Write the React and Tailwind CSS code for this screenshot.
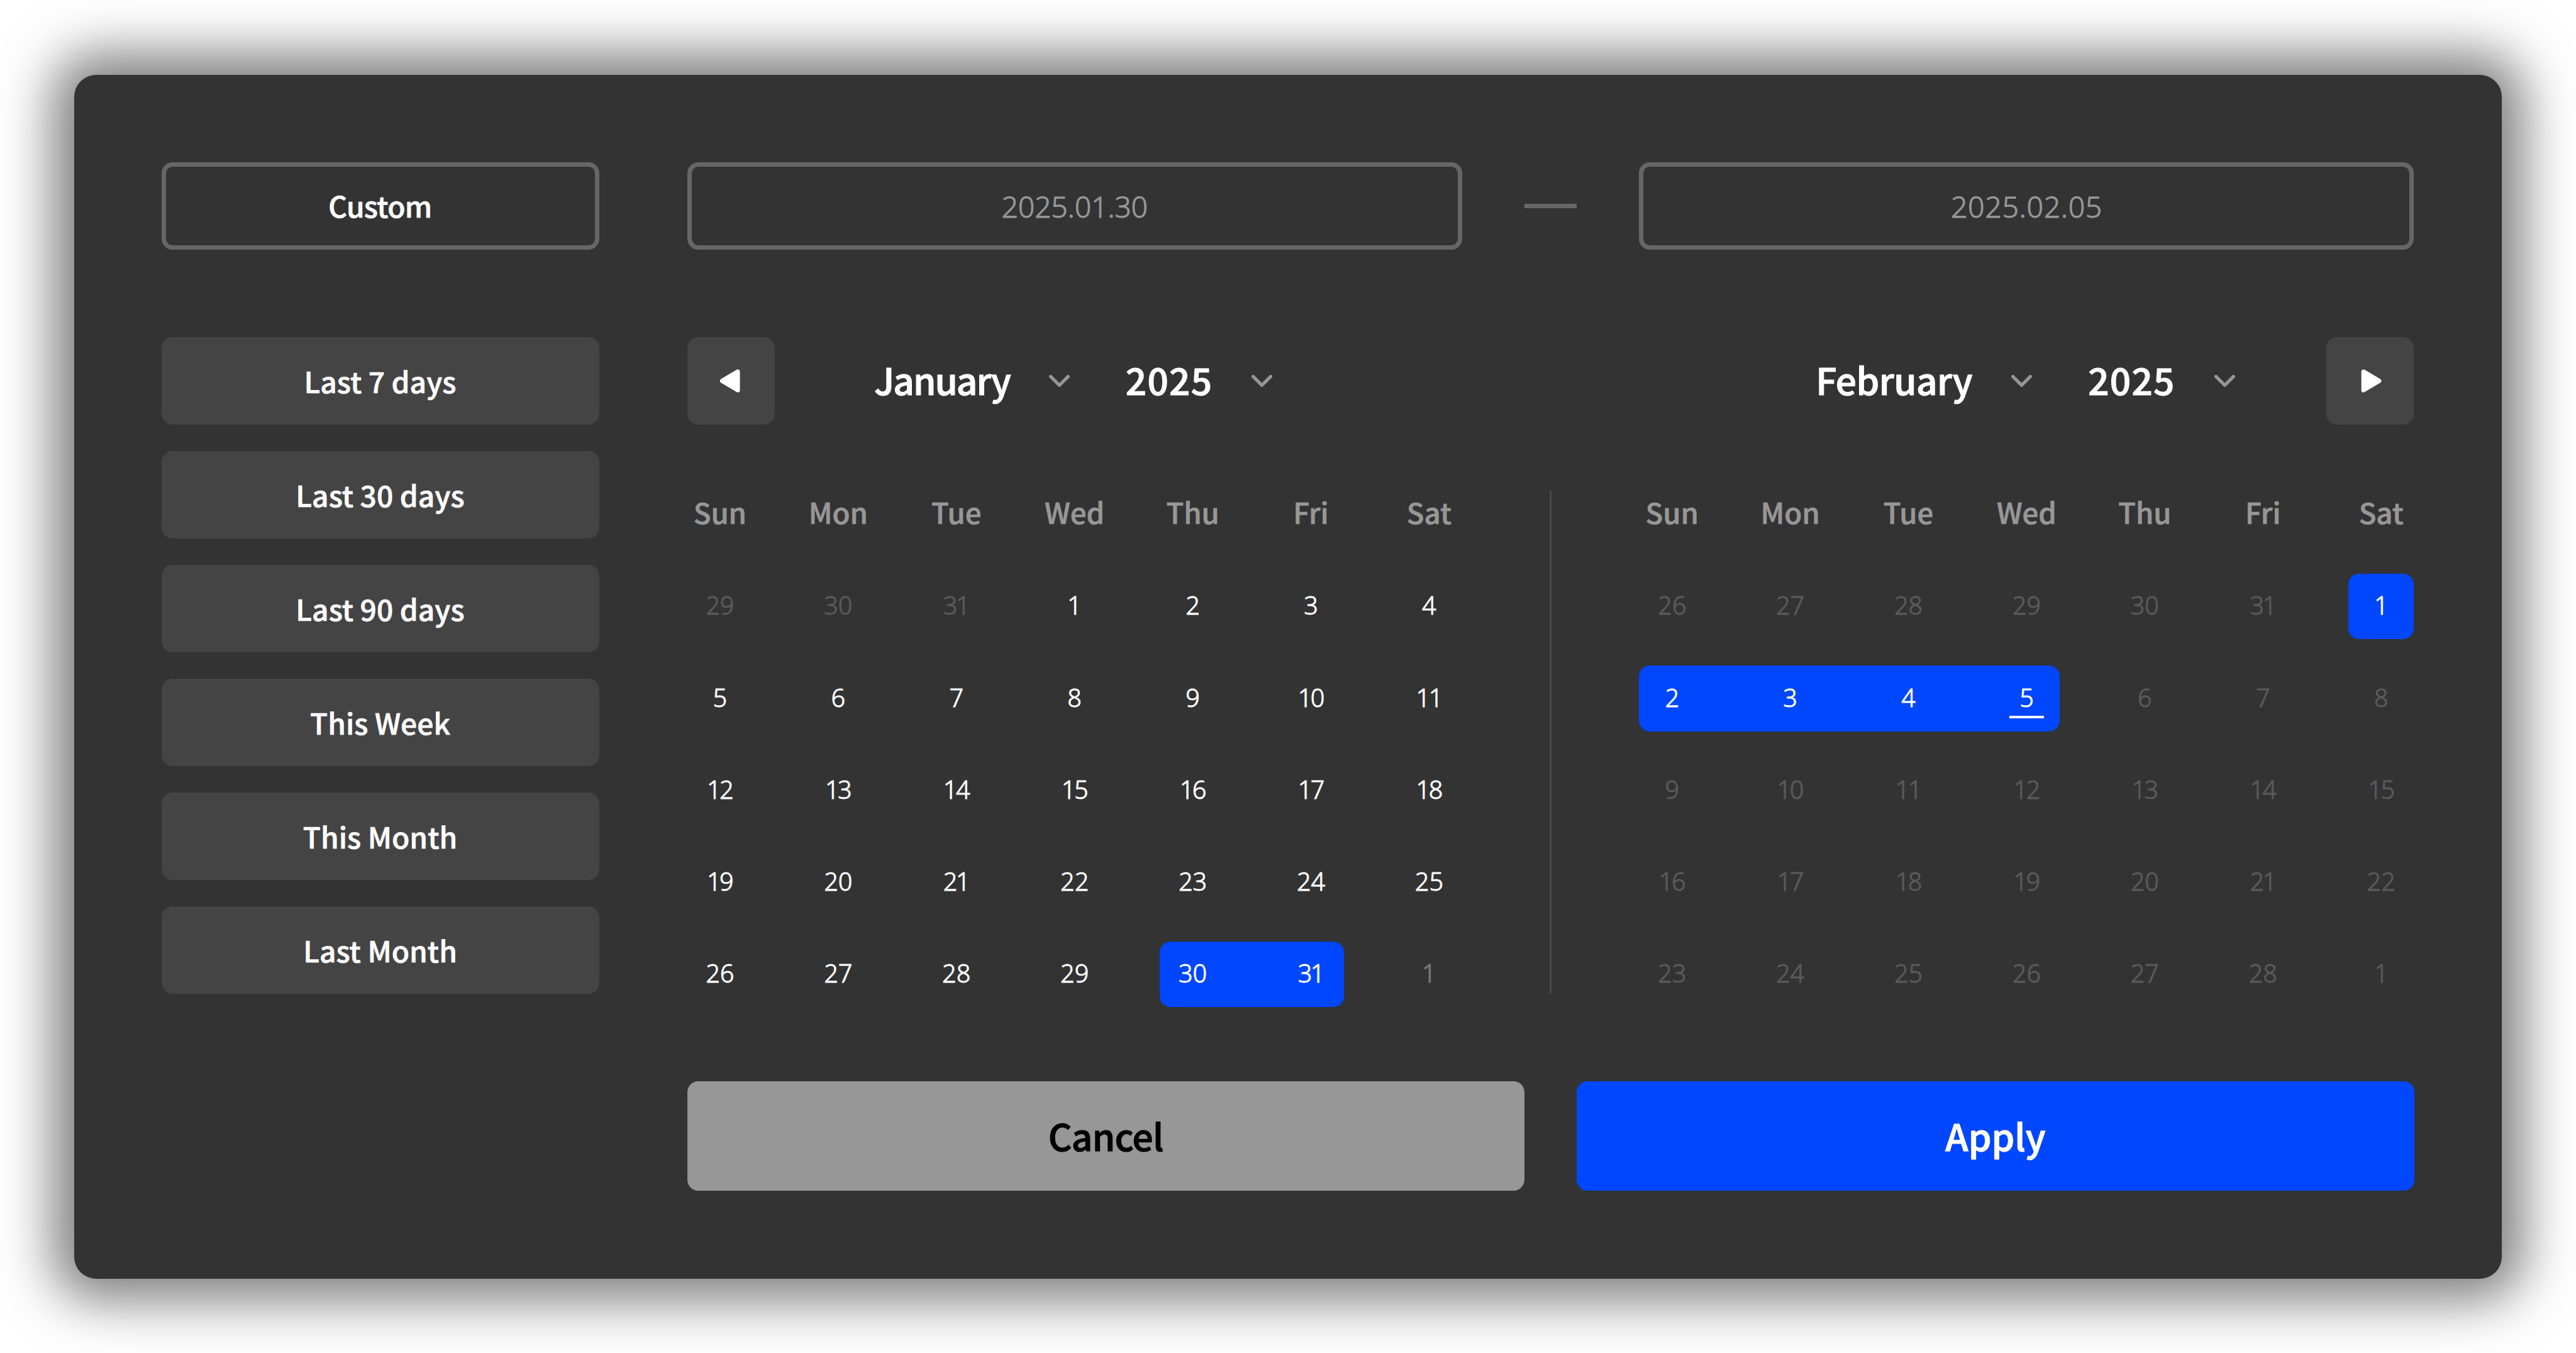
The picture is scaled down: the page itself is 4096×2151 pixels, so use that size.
import React, { useState } from "react";
import clsx from "clsx";

const PRESETS = [
  "Last 7 days",
  "Last 30 days",
  "Last 90 days",
  "This Week",
  "This Month",
  "Last Month",
];

const WEEKDAYS = ["Sun", "Mon", "Tue", "Wed", "Thu", "Fri", "Sat"];

const range = (from, to, state) =>
  Array.from({ length: to - from + 1 }, (_, i) => ({ day: from + i, state }));

const JANUARY = [
  ...range(29, 31, "disabled"),
  ...range(1, 29, "default"),
  ...range(30, 31, "selected"),
  ...range(1, 1, "outside"),
];

const FEBRUARY = [
  ...range(26, 31, "disabled"),
  ...range(1, 4, "selected"),
  { day: 5, state: "selected", today: true },
  ...range(6, 28, "disabled"),
  ...range(1, 1, "disabled"),
];

const toWeeks = (days) => {
  const weeks = [];
  for (let i = 0; i < days.length; i += 7) weeks.push(days.slice(i, i + 7));
  return weeks;
};

const dayColor = {
  default: "text-white",
  selected: "text-white",
  disabled: "text-[#5a5a5a]",
  outside: "text-[#7a7a7a]",
};

const monthTracking = {
  January: "-tracking-[1.9px]",
  February: "-tracking-[0.5px]",
};

const ChevronDown = () => (
  <svg className="h-[20px] w-[33px] shrink-0" viewBox="0 0 38 23" fill="none">
    <path
      d="M3 3L19 19L35 3"
      stroke="#979797"
      strokeWidth="6"
      strokeLinecap="round"
      strokeLinejoin="round"
    />
  </svg>
);

const NavButton = ({ prev }) => (
  <button
    aria-label={prev ? "Previous month" : "Next month"}
    className="size-[139.2px] shrink-0 rounded-[17.4px] bg-[#444]"
  >
    <svg className={clsx("size-full", prev && "-scale-x-100")} viewBox="0 0 160 160">
      <path
        d="M68 63V97L96.5 80Z"
        fill="white"
        stroke="white"
        strokeWidth="8"
        strokeLinejoin="round"
      />
    </svg>
  </button>
);

const DateField = ({ value }) => (
  <div className="flex h-[139.2px] w-[1232px] items-center justify-center rounded-[17.4px] border-[7px] border-[#666] pt-[2px] font-['Noto_Sans',sans-serif] text-[46.5px] leading-none font-light text-[#979797] [-webkit-text-stroke:0.9px]">
    <span className={value.includes("1") ? "-tracking-[0.3px]" : "tracking-[0.6px]"}>{value}</span>
  </div>
);

const MonthHeader = ({ month, year, side }) => (
  <div className="flex h-[139.2px] items-center">
    {side === "left" ? <NavButton prev /> : <div className="w-[139.2px]" />}
    <div className="flex flex-1 items-center justify-center pr-[4px] text-[58.5px] leading-none font-medium text-white [-webkit-text-stroke:1.1px]">
      <span className={clsx("mr-[62px] pb-[4px]", monthTracking[month])}>{month}</span>
      <ChevronDown />
      <span className="mr-[62px] ml-[89px] pb-[4px] tracking-[1.3px]">{year}</span>
      <ChevronDown />
    </div>
    {side === "right" ? <NavButton /> : <div className="w-[139.2px]" />}
  </div>
);

const Day = ({ item, prev, next }) => {
  const selected = item.state === "selected";
  const joinsPrev = prev?.state === "selected";
  const joinsNext = next?.state === "selected";
  const label = String(item.day);

  return (
    <div className="relative flex size-[104.4px] items-center justify-center">
      {selected && (
        <div
          className={clsx(
            "absolute inset-y-0 left-0 bg-[#0047ff]",
            !joinsPrev && "rounded-l-[17.4px]",
            joinsNext ? "-right-[85px]" : "right-0 rounded-r-[17.4px]"
          )}
        />
      )}
      <span
        className={clsx(
          "relative pb-[2px]",
          dayColor[item.state],
          label.length > 1 && label.includes("1") && "pr-[1.5px] -tracking-[2.5px]"
        )}
      >
        {label}
      </span>
      {item.today && (
        <div className="absolute bottom-[20.9px] h-[3.5px] w-[55.7px] bg-white" />
      )}
    </div>
  );
};

const Calendar = ({ month, year, side, days }) => (
  <div className="w-[1232px]">
    <MonthHeader month={month} year={year} side={side} />

    {/* Weekdays */}
    <div className="mt-[90.5px] flex h-[104.4px] items-center justify-between text-[45.5px] leading-none font-medium text-[#979797] [-webkit-text-stroke:0.7px]">
      {WEEKDAYS.map((name) => (
        <div key={name} className="flex w-[104.4px] justify-center pb-[8px]">
          {name}
        </div>
      ))}
    </div>

    {/* Weeks */}
    <div className="mt-[41.8px] flex flex-col gap-[41.8px] font-['Noto_Sans',sans-serif] text-[39.6px] leading-none font-light [-webkit-text-stroke:0.9px]">
      {toWeeks(days).map((week, w) => (
        <div key={w} className="flex justify-between">
          {week.map((item, i) => (
            <Day key={i} item={item} prev={week[i - 1]} next={week[i + 1]} />
          ))}
        </div>
      ))}
    </div>
  </div>
);

export default function App() {
  const [dates] = useState({ start: "2025.01.30", end: "2025.02.05" });

  return (
    <div className="flex h-[2151px] w-[4096px] items-center justify-center overflow-hidden bg-white font-['Noto_Sans_CJK_KR',sans-serif]">
      <div className="flex h-[1914px] w-[3859.4px] gap-[139.2px] rounded-[34.8px] bg-[#333] p-[139.2px] shadow-[0_0_83.5px_34.8px_rgba(0,0,0,0.5)]">
        {/* Presets */}
        <div className="flex w-[696px] shrink-0 flex-col text-[46px] leading-none font-medium text-white [-webkit-text-stroke:0.7px]">
          <button className="mb-[139.2px] h-[139.2px] rounded-[17.4px] border-[7px] border-[#666] pr-[2px] pb-[2px] -tracking-[0.6px]">
            Custom
          </button>
          <div className="flex flex-col gap-[41.8px]">
            {PRESETS.map((label) => (
              <button key={label} className="h-[139.2px] rounded-[17.4px] bg-[#444] pr-[2px] pb-[2px] tracking-[0.1px]">
                {label}
              </button>
            ))}
          </div>
        </div>

        <div className="flex flex-1 flex-col">
          {/* Selected dates */}
          <div className="flex items-center justify-between">
            <DateField value={dates.start} />
            <div className="h-[7px] w-[83.5px] bg-[#666]" />
            <DateField value={dates.end} />
          </div>

          {/* Calendars */}
          <div className="mt-[139.2px] flex justify-between">
            <Calendar month="January" year="2025" side="left" days={JANUARY} />
            <div className="mt-[243.6px] h-[800.4px] w-[3.5px] bg-[#484848]" />
            <Calendar month="February" year="2025" side="right" days={FEBRUARY} />
          </div>

          {/* Actions */}
          <div className="mt-[118.3px] flex gap-[83.5px] text-[58.5px] leading-none font-medium [-webkit-text-stroke:1.1px]">
            <button className="h-[174px] flex-1 rounded-[17.4px] bg-[#979797] pb-[3px] -tracking-[0.7px] text-black">
              Cancel
            </button>
            <button className="h-[174px] flex-1 rounded-[17.4px] bg-[#0047ff] pb-[3px] text-white">
              Apply
            </button>
          </div>
        </div>
      </div>
    </div>
  );
}
